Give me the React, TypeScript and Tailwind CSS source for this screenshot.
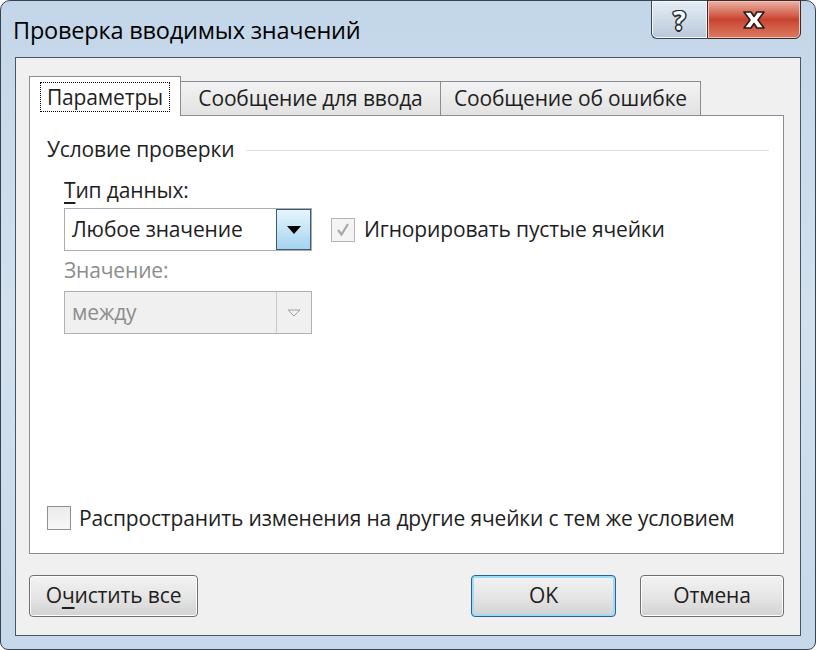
import React from "react";

const font = { fontFamily: '"Open Sans", "Noto Sans", sans-serif' };

const TabButton = ({ label, active }: { label: string; active?: boolean }) => {
    if (active) {
        return (
            <div className="relative z-10 -mb-px flex h-[40px] w-[152px] items-center justify-center border border-b-0 border-[#898c95] bg-white">
                <span className="border border-dotted border-black px-[6px] py-[1px] leading-[26px]">{label}</span>
            </div>
        );
    }
    return (
        <div className="flex h-[34px] w-[260px] items-center justify-center border border-l-0 border-b-0 border-[#898c95] bg-gradient-to-b from-[#f3f3f3] to-[#e2e2e2]">
            {label}
        </div>
    );
};

const Btn = ({ children, w, def }: { children: React.ReactNode; w: string; def?: boolean }) => (
    <button
        className={`flex h-[42px] items-center justify-center rounded-[4px] border bg-gradient-to-b from-[#f2f2f2] via-[#e6e6e6] to-[#d2d2d2] ${w} ${
            def ? "border-[#2c628b] shadow-[inset_0_0_0_2px_#9ddcfa]" : "border-[#707070] shadow-[inset_0_0_0_1px_#fcfcfc]"
        }`}
    >
        {children}
    </button>
);

export default function App() {
    return (
        <div className="h-[650px] w-[816px] overflow-hidden bg-white text-[21px] tracking-[-0.15px] text-[#1e1e1e]" style={font}>
            <div className="flex h-full flex-col rounded-t-[10px] rounded-b-[8px] border border-[#38434f] bg-gradient-to-b from-[#c3d6e9] via-[#d3e1ee] to-[#c6d8e9] px-[14px] pb-[13px]">
                {/* title bar */}
                <div className="flex h-[56px] shrink-0 items-start">
                    <div className="-ml-[2px] pt-[12px] text-[23.5px] tracking-[-0.2px] text-black">Проверка вводимых значений</div>
                    <div className="ml-auto -mt-px flex">
                        <div className="flex h-[39px] w-[56px] items-center justify-center rounded-bl-[6px] border border-r-0 border-[#3a4654] bg-gradient-to-b from-[#e6eef6] via-[#cfdbe8] to-[#b7c8da] shadow-[inset_0_0_0_1px_#f4f8fb]">
                            <span className="text-[26px] font-bold leading-none text-white [text-shadow:1.5px_0_0_#1f2b38,-1.5px_0_0_#1f2b38,0_1.5px_0_#1f2b38,0_-1.5px_0_#1f2b38,1px_1px_0_#1f2b38,-1px_-1px_0_#1f2b38,1px_-1px_0_#1f2b38,-1px_1px_0_#1f2b38]">?</span>
                        </div>
                        <div className="flex h-[39px] w-[94px] items-center justify-center rounded-br-[6px] border border-[#3a2a2a] bg-gradient-to-b from-[#eab0a3] via-[#c8432f] to-[#dc7a63] shadow-[inset_0_0_0_1px_#f2c4b8]">
                            <svg width="28" height="22" viewBox="0 0 28 22">
                                <path d="M4 3 L11 3 L14 7.5 L17 3 L24 3 L18 11 L24 19 L17 19 L14 14.5 L11 19 L4 19 L10 11 Z" fill="#ffffff" stroke="#2a1a1a" strokeWidth="1.6" strokeLinejoin="round" />
                            </svg>
                        </div>
                    </div>
                </div>

                {/* client area */}
                <div className="flex flex-1 flex-col border border-[#4a5563] bg-[#f0f0f0] pb-[18px] pl-[13px] pr-[16px] pt-[18px]">
                    {/* tabs */}
                    <div className="flex items-end">
                        <TabButton label="Параметры" active />
                        <TabButton label="Сообщение для ввода" />
                        <TabButton label="Сообщение об ошибке" />
                    </div>

                    <div className="flex h-[439px] flex-col border border-[#898c95] bg-white pb-[19px] pl-[17px] pr-[14px] pt-[19px]">
                        <div className="flex h-[30px] items-center gap-[12px]">
                            <span>Условие проверки</span>
                            <div className="h-px flex-1 bg-[#d5dfe5]" />
                        </div>

                        <div className="ml-[17px] mt-[11px] flex flex-col">
                            <div className="h-[28px] leading-[28px]">
                                <u className="underline-offset-[4px]">Т</u>ип данных:
                            </div>
                            <div className="mt-[4px] flex items-center">
                                <div className="flex h-[43px] w-[248px] border border-[#abadb3] bg-white">
                                    <div className="flex flex-1 items-center pl-[7px]">Любое значение</div>
                                    <div className="flex w-[35px] items-center justify-center border border-[#3c5a72] bg-gradient-to-b from-[#e8f5fd] via-[#c4e5f6] to-[#a6d3ef]">
                                        <svg width="14" height="8" viewBox="0 0 14 8">
                                            <path d="M0 0 L14 0 L7 8 Z" fill="#000" />
                                        </svg>
                                    </div>
                                </div>
                                <div className="ml-[19px] flex items-center">
                                    <div className="flex h-[24px] w-[24px] items-center justify-center border border-[#b4b4b4] bg-[#f4f4f4]">
                                        <svg width="16" height="16" viewBox="0 0 16 16">
                                            <path d="M3 8 L6.5 12.5 L13 2" fill="none" stroke="#a8a8a8" strokeWidth="2.2" />
                                        </svg>
                                    </div>
                                    <span className="ml-[9px]">Игнорировать пустые ячейки</span>
                                </div>
                            </div>

                            <div className="mt-[5px] h-[28px] leading-[28px] text-[#8c8c8c]">Значение:</div>
                            <div className="mt-[7px] flex h-[43px] w-[248px] border border-[#b0b0b0] bg-[#f0f0f0]">
                                <div className="flex flex-1 items-center pl-[7px] text-[#8d8d8d]">между</div>
                                <div className="flex w-[35px] items-center justify-center border-l border-[#c8c8c8]">
                                    <svg width="14" height="8" viewBox="0 0 14 8">
                                        <path d="M1 1 L13 1 L7 7 Z" fill="none" stroke="#a0a0a0" strokeWidth="1" />
                                    </svg>
                                </div>
                            </div>
                        </div>

                        <div className="mt-auto flex items-center">
                            <div className="h-[24px] w-[24px] border border-[#8e8f8f] bg-gradient-to-b from-[#ebebeb] to-[#f8f8f8]" />
                            <span className="ml-[8px]">Распространить изменения на другие ячейки с тем же условием</span>
                        </div>
                    </div>

                    <div className="mt-[21px] flex items-center">
                        <Btn w="w-[169px]">
                            О<u className="underline-offset-[4px]">ч</u>истить все
                        </Btn>
                        <div className="flex-1" />
                        <Btn w="w-[145px]" def>
                            OK
                        </Btn>
                        <div className="w-[24px]" />
                        <Btn w="w-[144px]">Отмена</Btn>
                    </div>
                </div>
            </div>
        </div>
    );
}
